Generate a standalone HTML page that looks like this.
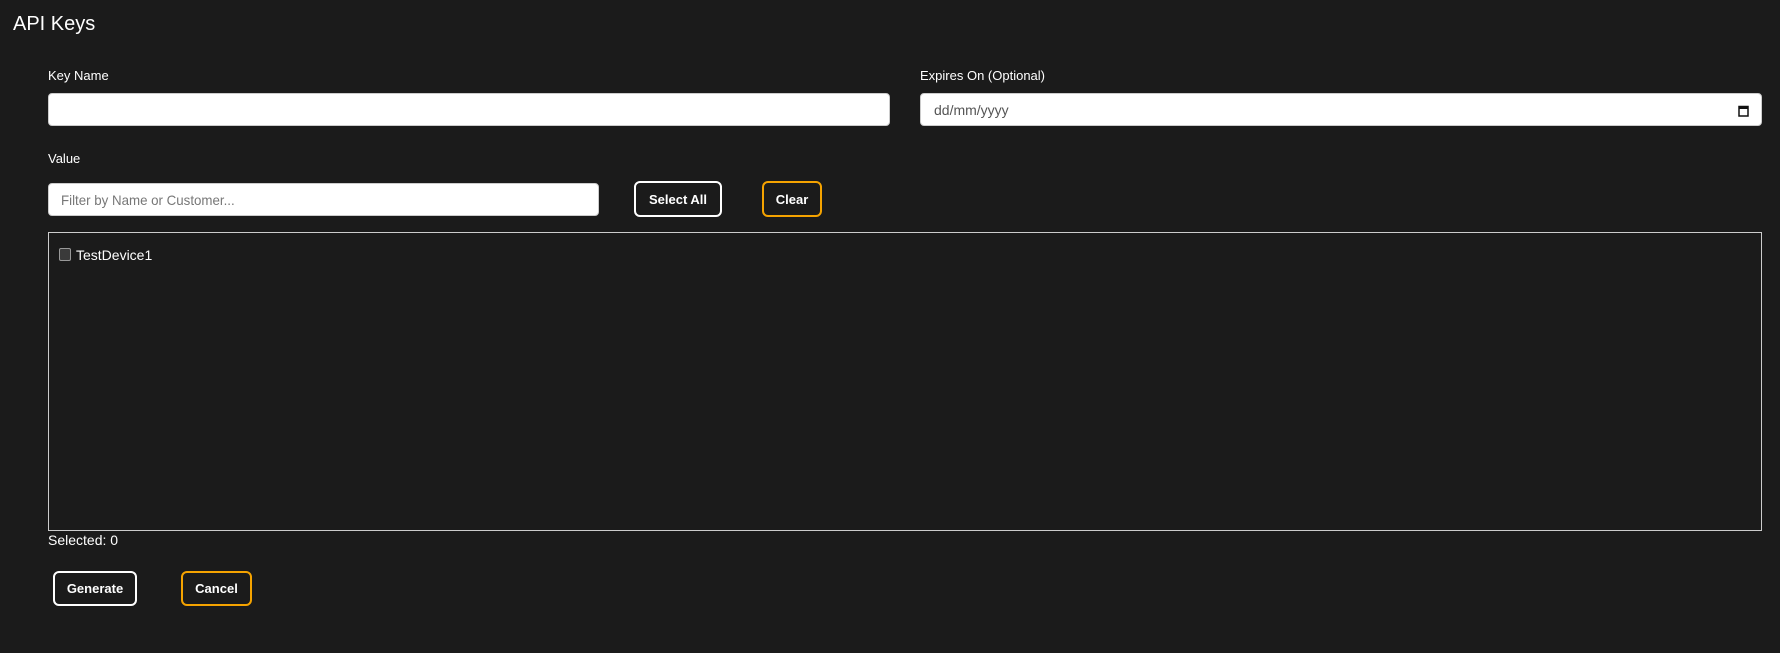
<!DOCTYPE html>
<html><head><meta charset="utf-8">
<style>
*{box-sizing:border-box;margin:0;padding:0}
body{width:1780px;height:653px;background:#1b1b1b;color:#fff;font-family:"Liberation Sans",sans-serif;position:relative;overflow:hidden}
.a{position:absolute;white-space:nowrap}
.lbl{font-size:13px;color:#fff}
.inp{background:#fff;border:1px solid #ccc;border-radius:4px}
.btn{border:2px solid #fff;border-radius:6px;font-weight:bold;font-size:13px;display:flex;align-items:center;justify-content:center;color:#fff}
.or{border-color:#f5a300}
</style></head><body>
<div class="a" style="left:13px;top:13px;font-size:20px">API Keys</div>
<div class="a lbl" style="left:48px;top:68px">Key Name</div>
<div class="a inp" style="left:48px;top:93px;width:842px;height:33px"></div>
<div class="a lbl" style="left:920px;top:68px">Expires On (Optional)</div>
<div class="a inp" style="left:920px;top:93px;width:842px;height:33px">
  <span class="a" style="left:13px;top:8px;font-size:14px;color:#555">dd/mm/yyyy</span>
  <svg class="a" style="right:12px;top:10px" width="11" height="13" viewBox="0 0 11 13"><rect x="1" y="2.5" width="9" height="9.5" fill="none" stroke="#111" stroke-width="1.5"/><rect x="1" y="2" width="9" height="3" fill="#111"/></svg>
</div>
<div class="a lbl" style="left:48px;top:151px">Value</div>
<div class="a inp" style="left:48px;top:183px;width:551px;height:33px">
  <span class="a" style="left:12px;top:8px;font-size:14px;color:#777;transform:scaleX(.95);transform-origin:left">Filter by Name or Customer...</span>
</div>
<div class="a btn" style="left:634px;top:181px;width:88px;height:36px">Select All</div>
<div class="a btn or" style="left:762px;top:181px;width:60px;height:36px">Clear</div>
<div class="a" style="left:48px;top:232px;width:1714px;height:299px;border:1px solid #ccc"></div>
<div class="a" style="left:59px;top:248px;width:12px;height:13px;border:1px solid #999;border-radius:2px;background:#3a3a3a"></div>
<div class="a" style="left:76px;top:247px;font-size:14px">TestDevice1</div>
<div class="a" style="left:48px;top:532px;font-size:14px">Selected: 0</div>
<div class="a btn" style="left:53px;top:571px;width:84px;height:35px">Generate</div>
<div class="a btn or" style="left:181px;top:571px;width:71px;height:35px">Cancel</div>
</body></html>
